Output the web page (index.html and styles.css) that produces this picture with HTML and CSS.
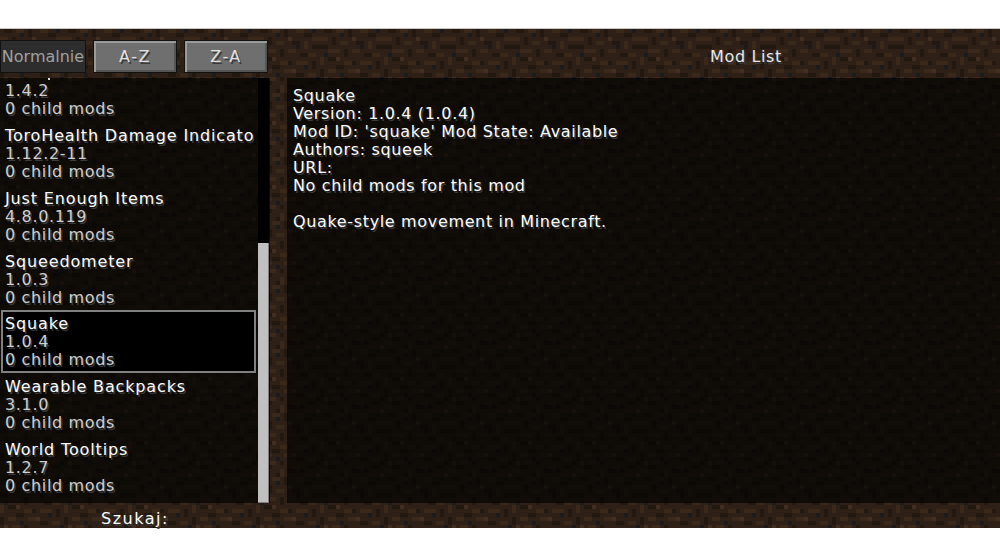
FILE: index.html
```html
<!DOCTYPE html>
<html lang="en">
<head>
    <meta charset="UTF-8">
    <meta name="viewport" content="width=device-width, initial-scale=1.0">
    <title>Mod List</title>
    <link rel="stylesheet" href="styles.css">
</head>
<body>
    <div class="screen">
        <div class="topbar">
            <div class="sort-buttons">
                <button type="button" class="button button-off button-first">Normalnie</button>
                <button type="button" class="button">A-Z</button>
                <button type="button" class="button">Z-A</button>
            </div>
            <div class="screen-title">Mod List</div>
        </div>
        <div class="main">
            <div class="mod-panel">
                <div class="mod-list">
                    <span class="clip-dot"></span>
                    <div class="mod mod-cut">
                        <div class="mod-name">&nbsp;</div>
                        <div class="mod-line">1.4.2</div>
                        <div class="mod-line">0 child mods</div>
                    </div>
                    <div class="mod">
                        <div class="mod-name">ToroHealth Damage Indicato</div>
                        <div class="mod-line">1.12.2-11</div>
                        <div class="mod-line">0 child mods</div>
                    </div>
                    <div class="mod">
                        <div class="mod-name">Just Enough Items</div>
                        <div class="mod-line">4.8.0.119</div>
                        <div class="mod-line">0 child mods</div>
                    </div>
                    <div class="mod">
                        <div class="mod-name">Squeedometer</div>
                        <div class="mod-line">1.0.3</div>
                        <div class="mod-line">0 child mods</div>
                    </div>
                    <div class="mod mod-selected">
                        <div class="mod-name">Squake</div>
                        <div class="mod-line">1.0.4</div>
                        <div class="mod-line">0 child mods</div>
                    </div>
                    <div class="mod">
                        <div class="mod-name">Wearable Backpacks</div>
                        <div class="mod-line">3.1.0</div>
                        <div class="mod-line">0 child mods</div>
                    </div>
                    <div class="mod">
                        <div class="mod-name">World Tooltips</div>
                        <div class="mod-line">1.2.7</div>
                        <div class="mod-line">0 child mods</div>
                    </div>
                </div>
                <div class="scrollbar"><div class="scroll-thumb"></div></div>
            </div>
            <div class="details">
                <p>Squake</p>
                <p>Version: 1.0.4 (1.0.4)</p>
                <p>Mod ID: 'squake' Mod State: Available</p>
                <p>Authors: squeek</p>
                <p>URL:</p>
                <p>No child mods for this mod</p>
                <p>&nbsp;</p>
                <p>Quake-style movement in Minecraft.</p>
            </div>
        </div>
        <div class="search-row">Szukaj:</div>
    </div>
</body>
</html>
```

FILE: styles.css
```css
html, body {
    margin: 0;
    height: 538px;
    overflow: hidden;
    background-color: #fff;
}
body {
    padding-top: 28px;
    box-sizing: border-box;
    font-family: "DejaVu Sans", sans-serif;
    font-size: 16px;
    letter-spacing: 0.65px;
    color: #fff;
    text-shadow: 1.5px 1.5px 0 #3a3a3a;
}
.screen {
    height: 500px;
    display: flex;
    flex-direction: column;
    background-color: #2e2017;
    background-size: 64px 64px;
    background-image: url("data:image/svg+xml,%3Csvg xmlns='http://www.w3.org/2000/svg' viewBox='0 0 16 16' shape-rendering='crispEdges'%3E%3Crect width='16' height='16' fill='%232e2017'/%3E%3Cpath fill='%2323180f' d='M1 0h2v1h-2zM7 0h1v2h-1zM12 1h2v1h-2zM3 2h1v2h-1zM9 3h2v1h-2zM0 4h2v1h-2zM14 4h2v1h-2zM6 5h1v2h-1zM11 6h2v1h-2zM2 7h2v1h-2zM8 8h1v1h-1zM14 8h1v2h-1zM4 9h2v1h-2zM0 10h1v2h-1zM10 11h2v1h-2zM6 12h1v1h-1zM13 13h2v1h-2zM2 13h2v1h-2zM8 14h2v1h-2zM5 15h1v1h-1z'/%3E%3Cpath fill='%233a281b' d='M4 0h2v1h-2zM10 0h2v1h-2zM0 2h2v1h-2zM14 2h2v1h-2zM5 3h2v1h-2zM12 3h1v2h-1zM2 5h3v1h-3zM8 5h2v1h-2zM13 6h2v1h-2zM0 7h1v2h-1zM6 8h2v1h-2zM10 8h3v1h-3zM2 10h2v1h-2zM7 10h2v1h-2zM13 11h2v1h-2zM3 12h2v1h-2zM9 13h2v1h-2zM0 14h2v1h-2zM12 15h2v1h-2zM6 14h1v2h-1z'/%3E%3Cpath fill='%231b1b1e' d='M5 1h1v1h-1zM14 0h1v1h-1zM10 4h1v1h-1zM1 6h1v1h-1zM12 9h1v1h-1zM5 11h1v1h-1zM15 12h1v1h-1zM11 14h1v1h-1z'/%3E%3Cpath fill='%23422e20' d='M8 2h1v1h-1zM4 7h1v1h-1zM9 10h1v1h-1zM1 12h1v1h-1zM15 15h1v1h-1z'/%3E%3C/svg%3E");
    border-top: 1px solid #c9c6c3;
    box-sizing: border-box;
}
.topbar {
    height: 49px;
    padding-top: 11px;
    box-sizing: border-box;
    display: flex;
    flex-shrink: 0;
}
.sort-buttons {
    display: flex;
    gap: 7px;
    width: 268px;
}
.button {
    width: 84px;
    height: 33px;
    padding: 0;
    border: 1px solid #111;
    background-color: #6f6f6f;
    box-shadow: inset 2px 2px 0 #9a9a9a, inset -2px -2px 0 #555;
    font-family: inherit;
    font-size: 16px;
    letter-spacing: 1.5px;
    color: #e0e0e0;
    text-shadow: 1.5px 1.5px 0 #3a3a3a;
}
.button-first {
    width: 86px;
}
.button-off {
    background-color: #2d2d2d;
    box-shadow: none;
    color: #a0a0a0;
    letter-spacing: 0;
    text-shadow: none;
}
.screen-title {
    flex: 1;
    padding: 7px 0 0 224px;
    text-align: center;
    color: #e8e8e8;
}
.main {
    height: 425px;
    display: flex;
    gap: 17px;
}
.mod-panel {
    position: relative;
    width: 270px;
    display: flex;
    background-color: rgba(0, 0, 0, 0.66);
}
.mod-list {
    position: relative;
    width: 258px;
    overflow: hidden;
}
.clip-dot {
    position: absolute;
    left: 48px;
    top: 0;
    width: 2px;
    height: 2px;
    background-color: #ddd;
}
.mod {
    height: 62.75px;
    padding: 3px 0 0 2px;
    margin-left: 1px;
    margin-right: 2px;
    box-sizing: border-box;
    border: 2px solid transparent;
    line-height: 18px;
    white-space: nowrap;
    overflow: hidden;
}
.mod-cut {
    margin-top: -18.75px;
}
.mod-selected {
    background-color: #000;
    border-color: #808080;
}
.mod-name {
    color: #fff;
    letter-spacing: 0.85px;
}
.mod-line {
    color: #d0d0d0;
}
.scrollbar {
    width: 11px;
    display: flex;
    flex-direction: column;
    justify-content: flex-end;
    background-color: #000;
}
.scroll-thumb {
    height: 260px;
    background-color: #c0c0c0;
    box-shadow: inset -1px -1px 0 #808080;
}
.details {
    flex: 1;
    padding: 9px 6px;
    background-color: rgba(0, 0, 0, 0.66);
    line-height: 18px;
}
.details p {
    margin: 0;
}
.search-row {
    height: 25px;
    padding: 7px 0 0 101px;
    box-sizing: border-box;
    line-height: 18px;
    letter-spacing: 1.5px;
}
```
